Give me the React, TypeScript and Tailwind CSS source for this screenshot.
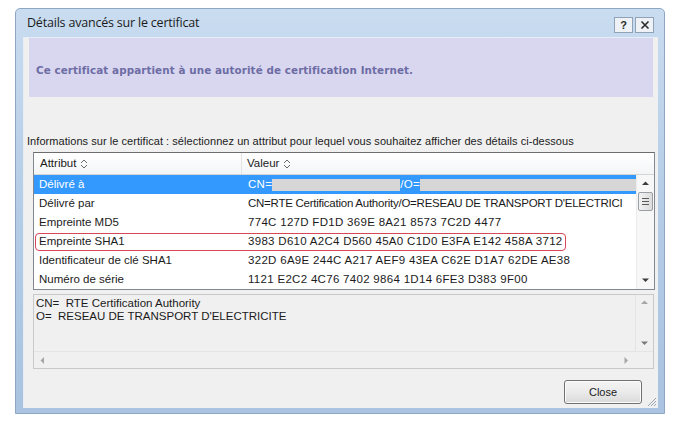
import React from "react";

type Row = {
  attr: string;
  value?: string;
  selected?: boolean;
  marked?: boolean;
  tight?: boolean;
};

const rows: Row[] = [
  { attr: "Délivré à", selected: true },
  {
    attr: "Délivré par",
    value: "CN=RTE Certification Authority/O=RESEAU DE TRANSPORT D'ELECTRICI",
    tight: true,
  },
  { attr: "Empreinte MD5", value: "774C 127D FD1D 369E 8A21 8573 7C2D 4477" },
  {
    attr: "Empreinte SHA1",
    value: "3983 D610 A2C4 D560 45A0 C1D0 E3FA E142 458A 3712",
    marked: true,
  },
  {
    attr: "Identificateur de clé SHA1",
    value: "322D 6A9E 244C A217 AEF9 43EA C62E D1A7 62DE AE38",
  },
  { attr: "Numéro de série", value: "1121 E2C2 4C76 7402 9864 1D14 6FE3 D383 9F00" },
];

const SortGlyph = () => (
  <svg width="8" height="10" viewBox="0 0 8 10" className="ml-[4px]">
    <path d="M1 4 L4 1 L7 4 M1 6 L4 9 L7 6" fill="none" stroke="#6a6a6a" strokeWidth="1" />
  </svg>
);

const Arrow = ({ dir, color = "#3c3c3c" }: { dir: "up" | "down" | "left" | "right"; color?: string }) => {
  const d = {
    up: "M0 4 L3.5 0.5 L7 4 Z",
    down: "M0 0.5 L7 0.5 L3.5 4 Z",
    left: "M4 0 L4 7 L0.5 3.5 Z",
    right: "M0.5 0 L0.5 7 L4 3.5 Z",
  }[dir];
  const vertical = dir === "up" || dir === "down";
  return (
    <svg width={vertical ? 7 : 5} height={vertical ? 5 : 7} viewBox={vertical ? "0 0 7 5" : "0 0 5 7"}>
      <path d={d} fill={color} />
    </svg>
  );
};

export default function App() {
  return (
    <div
      className="w-[676px] h-[427px] bg-white overflow-hidden pt-[8px] pl-[15px]"
      style={{ fontFamily: '"Liberation Sans", Arial, sans-serif' }}
    >
      {/* window frame */}
      <div className="w-[650px] h-[406px] flex flex-col rounded-t-[5px] border border-[#8ea7c4] bg-gradient-to-b from-[#c9dcf0] via-[#b4cce6] to-[#a9c3e0]">
        {/* title bar */}
        <div className="h-[28px] flex items-center justify-between pl-[11px] pr-[10px]">
          <div className="text-[12.5px] text-[#1b1b1b] tracking-[-0.2px]" style={{ fontFamily: '"Open Sans", "Liberation Sans", sans-serif' }}>
            Détails avancés sur le certificat
          </div>
          <div className="flex gap-[2px] mt-[4px]">
            <div className="w-[19px] h-[16px] border border-[#8fa2b8] bg-[#eef2f7] flex items-center justify-center text-[11px] font-bold text-[#2a2a2a] leading-none">
              ?
            </div>
            <div className="w-[19px] h-[16px] border border-[#8fa2b8] bg-[#eef2f7] flex items-center justify-center">
              <svg width="10" height="10" viewBox="0 0 10 10">
                <path d="M1.5 1.5 L8.5 8.5 M8.5 1.5 L1.5 8.5" stroke="#2a2a2a" strokeWidth="1.6" />
              </svg>
            </div>
          </div>
        </div>

        {/* client area */}
        <div className="ml-[7px] mr-[6px] mb-[5px] flex-1 bg-[#f0f0f0] border-l border-t border-[#e6edf5] flex flex-col relative">
          {/* info panel */}
          <div className="mx-[5px] h-[59px] bg-[#d9d7f0] flex items-center pl-[7px] pt-[7px]">
            <span
              className="text-[10.35px] text-[#6d6ca4] font-semibold tracking-[0.1px]"
              style={{ fontFamily: '"DejaVu Sans", Verdana, sans-serif' }}
            >
              Ce certificat appartient à une autorité de certification Internet.
            </span>
          </div>

          <div className="mt-[37px] pl-[3px] text-[11px] text-[#1b1b1b] tracking-[0.05px] h-[14px] leading-[14px] whitespace-nowrap">
            Informations sur le certificat : sélectionnez un attribut pour lequel vous souhaitez afficher des détails ci-dessous
          </div>

          {/* list view */}
          <div className="mt-[4px] ml-[9px] w-[622px] h-[138px] border border-[#828790] border-t-[#6d6d6d] bg-white flex flex-col text-[11.5px] text-[#1b1b1b]">
            <div className="h-[22px] flex bg-gradient-to-b from-white to-[#f4f5f7] border-b border-[#d5d5d5]">
              <div className="w-[208px] flex items-center pl-[6px] border-r border-[#e2e3e5]">
                Attribut
                <SortGlyph />
              </div>
              <div className="flex-1 flex items-center pl-[5px]">
                Valeur
                <SortGlyph />
              </div>
            </div>
            <div className="flex flex-1">
              <div className="flex-1 flex flex-col overflow-hidden">
                {rows.map((r) => (
                  <div
                    key={r.attr}
                    className={
                      "h-[19px] flex items-center relative shrink-0 " +
                      (r.selected ? "bg-[#3399ff] text-white" : "")
                    }
                  >
                    <div className="w-[208px] pl-[5px] whitespace-nowrap">{r.attr}</div>
                    <div
                      className={
                        "flex-1 pl-[6px] whitespace-nowrap overflow-hidden flex items-center " +
                        (r.tight ? "tracking-[-0.25px]" : "tracking-[0.3px]")
                      }
                    >
                      {r.selected ? (
                        <>
                          <span>CN=</span>
                          <div className="w-[128px] h-[12px] bg-[#d6d6d6]" />
                          <span>/O=</span>
                          <div className="flex-1 h-[12px] bg-[#d6d6d6]" />
                        </>
                      ) : (
                        r.value
                      )}
                    </div>
                    {r.marked && (
                      <div className="absolute left-[1px] top-[1px] w-[531px] h-[18px] border border-[#d8465a] rounded-[4px]" />
                    )}
                  </div>
                ))}
              </div>
              {/* vertical scrollbar */}
              <div className="w-[18px] bg-[#f7f7f7] border-l border-[#ececec] flex flex-col items-center">
                <div className="h-[17px] flex items-center justify-center">
                  <Arrow dir="up" />
                </div>
                <div className="w-[15px] h-[19px] rounded-[2px] border border-[#9aa0a6] bg-gradient-to-r from-[#f2f2f2] to-[#dcdcdc] flex flex-col items-center justify-center gap-[2px]">
                  <div className="w-[7px] h-px bg-[#5a5a5a]" />
                  <div className="w-[7px] h-px bg-[#5a5a5a]" />
                  <div className="w-[7px] h-px bg-[#5a5a5a]" />
                </div>
                <div className="flex-1" />
                <div className="h-[17px] flex items-center justify-center">
                  <Arrow dir="down" />
                </div>
              </div>
            </div>
          </div>

          {/* detail box */}
          <div className="mt-[4px] ml-[9px] w-[621px] h-[75px] border border-[#c9c9c9] bg-[#f0f0f0] flex flex-col">
            <div className="flex flex-1">
              <div className="flex-1 pl-[2px] pt-[2px] text-[11.5px] leading-[13px] text-[#1b1b1b] whitespace-pre">
                <div>CN=  RTE Certification Authority</div>
                <div>O=  RESEAU DE TRANSPORT D'ELECTRICITE</div>
              </div>
              <div className="w-[18px] border-l border-[#e4e4e4] flex flex-col items-center justify-between py-[5px]">
                <Arrow dir="up" color="#a6a6a6" />
                <Arrow dir="down" color="#7a7a7a" />
              </div>
            </div>
            <div className="h-[17px] flex border-t border-[#e4e4e4]">
              <div className="flex-1 flex items-center justify-between px-[6px]">
                <Arrow dir="left" color="#a6a6a6" />
                <Arrow dir="right" color="#a6a6a6" />
              </div>
              <div className="w-[18px] bg-[#f0f0f0]" />
            </div>
          </div>

          {/* footer */}
          <div className="flex justify-end mt-[11px] pr-[16px]">
            <button className="w-[78px] h-[24px] rounded-[3px] border border-[#707070] bg-gradient-to-b from-[#f4f4f4] via-[#ebebeb] to-[#d9d9d9] text-[11px] text-[#1b1b1b] shadow-[inset_0_0_0_1px_#fcfcfc]">
              Close
            </button>
          </div>

          {/* resize grip */}
          <svg width="11" height="11" viewBox="0 0 11 11" className="absolute right-[1px] bottom-[1px]">
            <path d="M10 2 L2 10 M10 5 L5 10 M10 8 L8 10" stroke="#9aa4b0" strokeWidth="1" />
          </svg>
        </div>
      </div>
    </div>
  );
}
